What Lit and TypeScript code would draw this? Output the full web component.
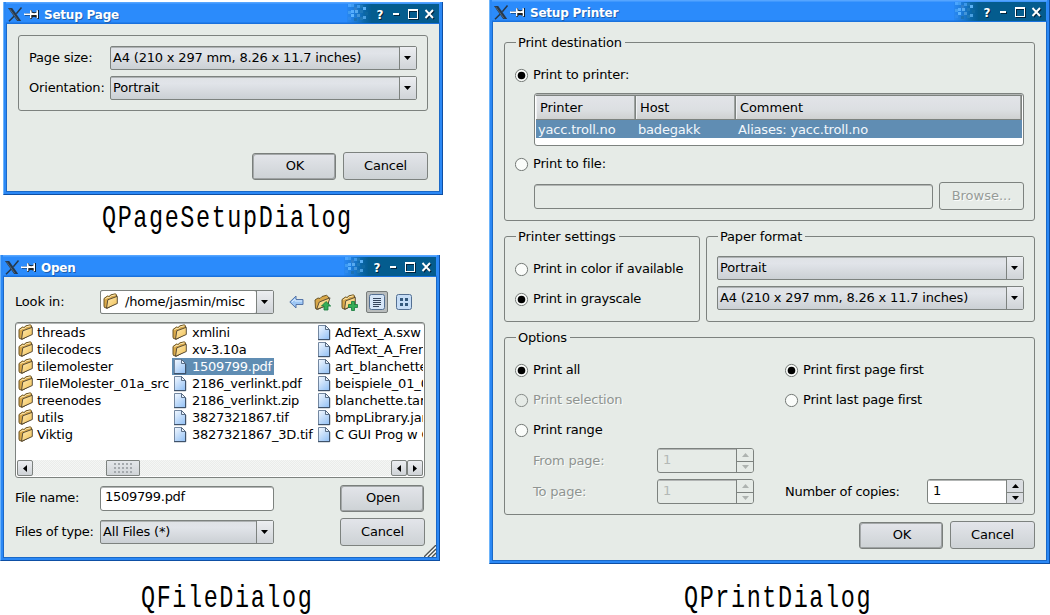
import { LitElement, html, svg, css, TemplateResult } from "lit";
import { customElement } from "lit/decorators.js";
import { classMap } from "lit/directives/class-map.js";

const xLogo = html`<svg class="xlogo" width="16" height="15" viewBox="0 0 16 15">
  <path d="M1 1h4.2l9 13h-4z" fill="#26384c" />
  <path d="M14.5.5L9.3 6.7M7 9.2L2 14.3" stroke="#26384c" stroke-width="1.5" fill="none" />
  <path d="M2.6 1.8L11 13.4" stroke="#5a6b78" stroke-width=".9" />
</svg>`;

const pin = html`<svg class="pin" width="16" height="11" viewBox="0 0 16 11">
  <path d="M1 5.5h5M7 1v9M14 1v9M7 3c2 1.5 5 1.5 7 0M7 8c2-1.5 5-1.5 7 0" stroke="#0a2038" stroke-width="2" fill="none" />
  <path d="M0 4.500h6v1.500H0zM6 1.200h1.500v8H6zM7.500 3.500c2 1 3.500 1 5 0v2.600h-5zM12.500 1.200h1.500v8h-1.500z" fill="#fff" />
  <path d="M7.500 6.200h5v2.500l-2.500-1-2.500 1z" fill="#222" />
</svg>`;

const dots: [number, number, string][] = [
  [1, 2, "#4aa5ff"], [4, 2, "#3f9cf2"], [10, 3, "#3c98ea"], [7, 5, "#2f7fcc"], [16, 5, "#5ab0f5"],
  [1, 9, "#3f9cf2"], [4, 8, "#55adff"], [8, 8, "#57aaf0"], [13, 8, "#1f78b8"], [10, 12, "#4394d8"],
  [4, 12, "#5cb4ff"], [1, 15, "#2f8aec"], [7, 16, "#1d72b4"], [13, 15, "#1f78b8"], [16, 14, "#4a9fe0"],
  [18, 10, "#0f68a0"], [13, 3, "#1f78b8"],
];

const controls = html`<svg class="controls" width="92" height="22" viewBox="0 0 92 22">
  <defs><linearGradient id="fade"><stop offset="0" stop-color="#1b78cf" stop-opacity="0.200" /><stop offset=".7" stop-color="#0b68aa" /><stop offset="1" stop-color="#045c92" /></linearGradient></defs>
  <rect x="0" y="2" width="24" height="19" fill="url(#fade)" />
  <rect x="24" y="2" width="68" height="19" fill="#045c8e" />
  ${dots.map(([x, y, c]) => svg`<rect x=${x} y=${y} width="3" height="3" fill=${c} />`)}
  <g transform="translate(1 1)" fill="#01243c" stroke="none">
    <text x="29.500" y="16.500" class="q">?</text>
    <path d="M46 11h6v2h-6z" /><path d="M61 7h10v10H61zM62 9v7h8V9z" fill-rule="evenodd" />
    <path d="M78.500 8l7.500 8M86 8l-7.500 8" stroke="#01243c" stroke-width="2" />
  </g>
  <text x="29.500" y="16.500" class="q" fill="#fff">?</text>
  <path d="M46 11h6v2h-6z" fill="#fff" />
  <path d="M61 7h10v10H61zM62 9v7h8V9z" fill="#fff" fill-rule="evenodd" />
  <path d="M78.500 8l7.500 8M86 8l-7.500 8" stroke="#fff" stroke-width="1.900" />
</svg>`;

const folderShape = svg`
  <path d="M1 5.500L4.500 3L6 3.500L8 1.800L12.500 .8L13.500 2V10L4.500 15.200L1.500 14.500L1 13z" fill="#d9a848" stroke="#6a5526" />
  <path d="M2.300 5.800L5 4.300L6.500 4.500L8.500 2.800L12.300 1.900" stroke="#fbe9b8" fill="none" />
  <path d="M4.800 6.800L14.300 3.300V10.500L3.500 15.300z" fill="url(#fold)" stroke="#4b4030" stroke-width=".9" />`;
const foldDef = svg`<defs><linearGradient id="fold" x1="0" y1="0" x2="1" y2="1"><stop offset="0" stop-color="#ffebb5" /><stop offset="1" stop-color="#f0bf52" /></linearGradient></defs>`;
const folder = html`<svg width="16" height="17" viewBox="0 0 16 17">${foldDef}${folderShape}</svg>`;
const file = html`<svg width="16" height="17" viewBox="0 0 16 17">
  <defs><linearGradient id="doc" x1="0" y1="0" x2=".7" y2="1"><stop offset="0" stop-color="#f4f9ff" /><stop offset="1" stop-color="#9cc6f6" /></linearGradient></defs>
  <path d="M2.500 1.500h7l4 4v10h-11z" fill="url(#doc)" stroke="#7387a0" />
  <path d="M2 15.700h11.700V6" fill="none" stroke="#33475e" />
  <path d="M9.500 1.500v4h4z" fill="#e9f2fd" stroke="#4c6078" stroke-width=".9" />
</svg>`;

const toolBack = html`<svg width="15" height="14" viewBox="0 0 15 14">
  <path d="M.8 7L7 1v3.500h7v5H7V13z" fill="#9cc6f4" stroke="#5575a8" /><path d="M3 7L6 4v2h7" stroke="#d9ebff" fill="none" /></svg>`;
const toolUp = html`<svg width="18" height="17" viewBox="0 0 18 17">${foldDef}
  <path d="M1 6L4 4L6 4.500L8 2.500L12.500 1.300L14.500 3V10L4 15.300L1.500 14.500z" fill="#d9a848" stroke="#6a5526" />
  <path d="M5.300 8L16 3.800L13.500 11.500L2.600 15.300z" fill="url(#fold)" stroke="#4b4030" stroke-width=".9" />
  <path d="M12 7.500l4.700 4.500h-2.700v4h-4v-4H7.500z" fill="#37ad57" stroke="#12793a" stroke-width=".8" /></svg>`;
const toolNew = html`<svg width="18" height="17" viewBox="0 0 18 17">${foldDef}${folderShape}
  <path d="M10.500 7.500h3v3h3v3h-3v3h-3v-3h-3v-3h3z" fill="#37ad57" stroke="#12793a" stroke-width=".8" /></svg>`;
const toolList = html`<svg width="16" height="16" viewBox="0 0 16 16">
  <rect x=".5" y=".5" width="15" height="15" rx="2" fill="#d6e6f8" stroke="#536f92" />
  <path d="M4 4.500h8M4 6.500h8M4 8.500h8M4 10.500h8M4 12.500h6" stroke="#35455c" stroke-width="1" /></svg>`;
const toolGrid = html`<svg width="16" height="16" viewBox="0 0 16 16">
  <rect x=".5" y=".5" width="15" height="15" rx="2" fill="#c6ddf6" stroke="#536f92" />
  <path d="M4 4h3v3H4zM9 4h3v3H9zM4 9h3v3H4zM9 9h3v3H9z" fill="#33587c" /></svg>`;

const tri = (d: "up" | "down" | "left" | "right", c = "#000") => {
  const p = { down: "M0 0h7L3.500 4z", up: "M0 4h7L3.500 0z", left: "M4 0v7L0 3.500z", right: "M0 0v7L4 3.500z" }[d];
  const wide = d === "up" || d === "down";
  return html`<svg width=${wide ? 7 : 4} height=${wide ? 4 : 7}><path d=${p} fill=${c} /></svg>`;
};

const combo = (content: unknown, cls = "") => html`<div class="combo ${cls}"><div class="value">${content}</div><div class="drop">${tri("down")}</div></div>`;
const button = (label: string, kind = "") => html`<button class="btn ${kind}">${label}</button>`;
const radio = (label: string, on = false, off = false) => html`<label class=${classMap({ radio: true, disabled: off })}>
  <svg width="14" height="14" viewBox="0 0 14 14"><circle cx="6.500" cy="7.500" r="6.100" fill=${off ? "#e6ebe7" : "#fafcfa"} stroke=${off ? "#858a87" : "#747976"} />
  ${on ? svg`<circle cx="6.500" cy="7.500" r="3.800" fill="#000" />` : ""}</svg><span>${label}</span></label>`;
const spin = (off: boolean) => html`<div class=${classMap({ spin: true, off })}>
  <div class="num">1</div><div class="steps"><div>${tri("up", off ? "#aeb3b0" : "#000")}</div><div>${tri("down", off ? "#aeb3b0" : "#000")}</div></div></div>`;
const frame = (cls: string, title: string, body: TemplateResult) => html`<section class="window ${cls}">
  <header>${xLogo}${pin}<h1>${title}</h1>${controls}</header><div class="client">${body}</div></section>`;

type Entry = { name: string; dir?: boolean; selected?: boolean };
const columns: Entry[][] = [
  ["threads", "tilecodecs", "tilemolester", "TileMolester_01a_src", "treenodes", "utils", "Viktig"].map((name) => ({ name, dir: true })),
  [{ name: "xmlini", dir: true }, { name: "xv-3.10a", dir: true }, { name: "1509799.pdf", selected: true },
    { name: "2186_verlinkt.pdf" }, { name: "2186_verlinkt.zip" }, { name: "3827321867.tif" }, { name: "3827321867_3D.tif" }],
  ["AdText_A.sxw", "AdText_A_Fren", "art_blanchette", "beispiele_01_0", "blanchette.tar", "bmpLibrary.jar", "C GUI Prog w Q"].map((name) => ({ name })),
];
const paper = "A4 (210 x 297 mm, 8.26 x 11.7 inches)";

@customElement("app-root")
export class AppRoot extends LitElement {
  static styles = css`
    :host { display: block; width: 1050px; height: 615px; overflow: hidden; background: #fff; color: #000;
      font: 13px/16px "DejaVu Sans", sans-serif; letter-spacing: -.18px; }
    * { box-sizing: border-box; }
    svg { display: block; flex: none; }
    .page { display: flex; height: 615px; }
    .left { width: 489px; flex: none; padding-top: 2px; }
    .right { width: 561px; flex: none; }
    .window { background: #2b88f5; display: flex; flex-direction: column; border: solid; border-width: 0 1px 1px;
      border-color: #6db4fb #0e4fa4 #0e4fa4 #6db4fb; padding: 0 2px 2px; }
    header { height: 22px; flex: none; display: flex; background: linear-gradient(#55a5ff 0 1px, #2b8bfb 2px 20px, #1971dd 21px); }
    .xlogo { margin: 5px 0 0 1px; }
    .pin { margin: 7px 0 0 1px; }
    h1 { margin: 5px 0 0 4px; font: bold 12px/16px "DejaVu Sans", sans-serif; color: #fff; text-shadow: 1px 1px 0 #1d5fae; flex: 1; white-space: nowrap; letter-spacing: -.22px; }
    .controls { margin-right: 1px; }
    .q { font: bold 12px "DejaVu Sans", sans-serif; }
    .client { flex: 1; min-height: 0; background: #e6ebe7; border: solid #1a69c8; border-width: 0 1px 1px; display: flex; flex-direction: column; white-space: nowrap; }
    .setup { width: 440px; height: 193px; margin-left: 3px; }
    .open { width: 440px; height: 306px; }
    .print { width: 561px; height: 564px; }
    .caption { font: 30.500px/36px "Liberation Mono", monospace; letter-spacing: 2.050px; transform-origin: 0 0; transform: scaleX(.77); white-space: nowrap; }
    .cap1 { margin: 6px 0 0 102px; height: 54px; }
    .cap2 { margin: 20px 0 0 141px; }
    .cap3 { margin: 17px 0 0 195px; }

    .panel { border: 1px solid #7d827f; border-radius: 3px; }
    .combo { height: 24px; display: flex; border: 1px solid #7d827f; border-radius: 2px; background: linear-gradient(#dfe2e6, #e1e4e9 30%, #cbd0d4); box-shadow: inset 0 1px #aeb2b3; }
    .value { flex: 1; padding: 3px 0 0 2px; min-width: 0; display: flex; }
    .drop { width: 17px; border-left: 1px solid #7d827f; display: flex; justify-content: center; padding: 9px 1px 0 0; background: linear-gradient(#eceef1, #d0d4d8); }
    .combo.white .value { background: #fff; border-radius: 2px; }
    .btn { font: inherit; letter-spacing: inherit; color: #000; width: 85px; height: 28px; padding: 0 0 1px; border: 1px solid #7d827f; border-radius: 3px; background: linear-gradient(#e3e5ea, #cdd2d5); }
    .btn.default { width: 84px; height: 27px; padding-left: 2px; border-color: #7a7f7c; box-shadow: inset -1px -1px #9ea2a3, inset 1px 1px #a4a8a9; }
    .btn.off { background: #e6ebe7; color: #969b98; text-shadow: 1px 1px #fafcfa; letter-spacing: 0; }
    .buttons { display: flex; gap: 7px; align-items: center; justify-content: flex-end; }

    .setup .panel { margin: 11px 11px 0; height: 76px; padding: 10px; display: flex; flex-direction: column; gap: 6px; }
    .setup .line { display: flex; align-items: center; }
    .setup .line span { width: 81px; }
    .setup .combo { width: 307px; }
    .setup .buttons { margin: 41px 11px 0 0; }

    .look { display: flex; margin: 13px 0 0 11px; height: 24px; align-items: center; }
    .look > span { width: 85px; }
    .look .combo { width: 174px; }
    .look .combo svg { margin-top: -1px; }
    .look .drop svg { margin-top: 0; }
    .look .path { margin-left: 6px; letter-spacing: -.18px; }
    .look .value { padding-left: 2px; }
    .tools { display: flex; align-items: center; }
    .back { margin-left: 15px; } .up { margin-left: 10px; } .new { margin-left: 9px; }
    .listview { margin-left: 7px; width: 22px; height: 22px; border: 1px solid #777c7a; border-radius: 2px; background: #b9bdbd; display: grid; place-items: center; }
    .gridview { margin-left: 8px; }
    .files { margin: 8px 0 0 11px; width: 410px; height: 156px; background: #fff; border: 1px solid #7d827f; border-radius: 3px; padding: 1px; box-shadow: inset 0 1px #b2b5b4; }
    .cols { display: flex; height: 136px; overflow: hidden; }
    .col { flex: none; }
    .c0 { width: 155px; padding-left: 1px; } .c1 { width: 144px; } .c2 { width: 130px; }
    .c0 .entry svg, .c2 .entry svg { margin-right: 3px; }
    .entry { display: flex; height: 17px; line-height: 17px; }
    .entry svg { margin-right: 4px; }
    .c0, .c2 { letter-spacing: -.15px; } .c1 { letter-spacing: -.26px; }
    .selected { width: 102px; background: #608db3; color: #fff; letter-spacing: -.3px; }
    .bar { display: flex; height: 16px; background: repeating-conic-gradient(#f5f6f5 0 25%, #eaecea 0 50%) 0 0 / 2px 2px; }
    .arrow { width: 16px; border: 1px solid #7d827f; border-radius: 2px; background: linear-gradient(#eceef1, #cfd3d7); display: grid; place-items: center; }
    .gap1 { width: 73px; } .gap2 { flex: 1; }
    .thumb { width: 34px; border: 1px solid #7d827f; border-radius: 1px; background: linear-gradient(#e4e7ea, #d0d4d7); padding: 2px 7px; }
    .grip { height: 10px; background: radial-gradient(circle at 1px 1px, #a4a9ad .8px, transparent 1px) 0 0 / 4px 4px; }
    .field { display: flex; align-items: center; margin-left: 11px; }
    .field > span { width: 85px; letter-spacing: -.3px; }
    .field .combo, .edit { width: 174px; }
    .edit { height: 25px; border: 1px solid #7d827f; border-radius: 3px; background: #fff; padding: 2px 4px; box-shadow: inset 0 1px #b2b5b4; letter-spacing: -.3px; }
    .field .btn { margin-left: 66px; }
    .f1 { margin-top: 7px; height: 26px; } .f2 { margin-top: 7px; height: 28px; }
    .resize { align-self: flex-end; margin-top: -1px; }

    fieldset { border: 1px solid #7d827f; border-radius: 3px; margin: 0; padding: 0; min-width: 0; }
    legend { padding: 1px 3px 0 2px; margin-left: 1px; height: 16px; }
    .print .client { padding: 12px 11px 0; }
    .radio { display: flex; gap: 4px; height: 16px; align-items: center; }
    .disabled { color: #8f9491; text-shadow: 1px 1px #fafcfa; }
    .dest { height: 187px; padding: 17px 10px 0; }
    .table { margin: 10px 0 0 19px; height: 53px; border: 1px solid #7d827f; border-radius: 3px; background: #fff; padding: 1px; box-shadow: inset 0 1px #b2b5b4; }
    .head, .item { display: grid; grid-template-columns: 100px 100px 1fr; }
    .head { letter-spacing: -.1px; }
    .head div { height: 25px; padding: 4px 0 0 4px; border: solid #7d827f; border-width: 1px 1px 1px 0; background: linear-gradient(#e2e4e8, #dcdfe2 60%, #cfd1d1); box-shadow: inset 1px 0 #f0f1f3, inset -1px 0 #9da19f; }
    .item { height: 18px; background: #608db3; color: #f2f7fb; }
    .item div { padding: 2px 0 0 2px; }
    .tofile { margin-top: 10px; }
    .browse { margin: 10px 0 0 19px; display: flex; gap: 6px; align-items: center; }
    .browse .path { flex: 1; height: 25px; border: 1px solid #7d827f; border-radius: 3px; box-shadow: inset 0 1px #b2b5b4; }
    .pair { display: flex; gap: 6px; margin-top: 7px; }
    .color { width: 196px; height: 94px; padding: 17px 10px 0; display: flex; flex-direction: column; gap: 14px; letter-spacing: -.26px; }
    .color legend { letter-spacing: -.1px; }
    .paper { width: 329px; height: 94px; padding: 12px 10px 0; }
    .paper .combo + .combo { margin-top: 6px; }
    .options { margin-top: 7px; height: 186px; padding: 17px 10px 0; }
    .cols2 { display: grid; grid-template-columns: 270px 1fr; row-gap: 14px; letter-spacing: -.22px; }
    .range { display: flex; align-items: center; height: 25px; margin-left: 18px; }
    .r1 { margin-top: 10px; } .r2 { margin-top: 6px; }
    .range .lab { width: 124px; padding-top: 1px; }
    .range .copies { margin-left: 31px; width: 142px; padding-top: 1px; letter-spacing: -.26px; }
    .spin { width: 97px; height: 25px; display: flex; border: 1px solid #7d827f; border-radius: 3px; background: #fff; overflow: hidden; }
    .num { flex: 1; padding: 3px 0 0 5px; box-shadow: inset 0 1px #b2b5b4; }
    .steps { width: 17px; border-left: 1px solid #7d827f; display: grid; grid-template-rows: 1fr 1fr; background: #dadde1; }
    .steps div { display: grid; place-items: center; }
    .steps div + div { border-top: 1px solid #7d827f; }
    .off.spin, .off .steps { background: #e6ebe7; }
    .off .num { color: #b3b8b5; }
    .print .buttons { margin-top: 6px; }
  `;

  private entry(e: Entry) {
    return html`<div class=${classMap({ entry: true, selected: !!e.selected })}>${e.dir ? folder : file}<span>${e.name}</span></div>`;
  }

  render() {
    return html`<main class="page">
      <div class="left">
        ${frame("setup", "Setup Page", html`
          <div class="panel">
            <div class="line"><span>Page size:</span>${combo(paper)}</div>
            <div class="line"><span>Orientation:</span>${combo("Portrait")}</div>
          </div>
          <div class="buttons">${button("OK", "default")}${button("Cancel")}</div>`)}
        <div class="caption cap1">QPageSetupDialog</div>
        ${frame("open", "Open", html`
          <div class="look"><span>Look in:</span>${combo(html`${folder}<span class="path">/home/jasmin/misc</span>`, "white")}
            <div class="tools"><div class="back">${toolBack}</div><div class="up">${toolUp}</div><div class="new">${toolNew}</div>
              <div class="listview">${toolList}</div><div class="gridview">${toolGrid}</div></div></div>
          <div class="files">
            <div class="cols">${columns.map((c, i) => html`<div class="col c${i}">${c.map((e) => this.entry(e))}</div>`)}</div>
            <div class="bar"><div class="arrow">${tri("left")}</div><div class="gap1"></div><div class="thumb"><div class="grip"></div></div>
              <div class="gap2"></div><div class="arrow">${tri("left")}</div><div class="arrow">${tri("right")}</div></div>
          </div>
          <div class="field f1"><span>File name:</span><div class="edit">1509799.pdf</div>${button("Open", "default")}</div>
          <div class="field f2"><span>Files of type:</span>${combo("All Files (*)")}${button("Cancel")}</div>
          <svg class="resize" width="12" height="12"><path d="M0 12L12 0M4 12L12 4M8 12L12 8" stroke="#4c504e" stroke-width="1.300" /><path d="M2 12L12 2M6 12L12 6" stroke="#fff" /></svg>`)}
        <div class="caption cap2">QFileDialog</div>
      </div>
      <div class="right">
        ${frame("print", "Setup Printer", html`
          <fieldset class="dest"><legend>Print destination</legend>
            ${radio("Print to printer:", true)}
            <div class="table">
              <div class="head"><div>Printer</div><div>Host</div><div>Comment</div></div>
              <div class="item"><div>yacc.troll.no</div><div>badegakk</div><div>Aliases: yacc.troll.no</div></div>
            </div>
            <div class="tofile">${radio("Print to file:")}</div>
            <div class="browse"><div class="path"></div>${button("Browse...", "off")}</div>
          </fieldset>
          <div class="pair">
            <fieldset class="color"><legend>Printer settings</legend>${radio("Print in color if available")}${radio("Print in grayscale", true)}</fieldset>
            <fieldset class="paper"><legend>Paper format</legend>${combo("Portrait")}${combo(paper)}</fieldset>
          </div>
          <fieldset class="options"><legend>Options</legend>
            <div class="cols2">${radio("Print all", true)}${radio("Print first page first", true)}
              ${radio("Print selection", false, true)}${radio("Print last page first")}${radio("Print range")}</div>
            <div class="range r1"><span class="lab disabled">From page:</span>${spin(true)}</div>
            <div class="range r2"><span class="lab disabled">To page:</span>${spin(true)}<span class="copies">Number of copies:</span>${spin(false)}</div>
          </fieldset>
          <div class="buttons">${button("OK", "default")}${button("Cancel")}</div>`)}
        <div class="caption cap3">QPrintDialog</div>
      </div>
    </main>`;
  }
}
